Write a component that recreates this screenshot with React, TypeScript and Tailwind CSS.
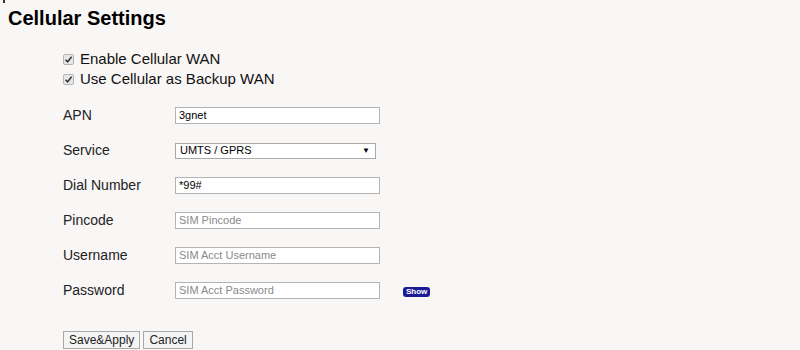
import React from 'react';

interface Field {
  label: string;
  value?: string;
  placeholder?: string;
}

const fields: Field[] = [
  { label: 'APN', value: '3gnet' },
  { label: 'Service' },
  { label: 'Dial Number', value: '*99#' },
  { label: 'Pincode', placeholder: 'SIM Pincode' },
  { label: 'Username', placeholder: 'SIM Acct Username' },
  { label: 'Password', placeholder: 'SIM Acct Password' },
];

const CheckRow: React.FC<{ label: string }> = ({ label }) => (
  <div className="flex items-center h-[20px]">
    <span className="w-[11px] h-[11px] border border-[#b5b5b5] bg-[#e6e6e6] rounded-[2px] flex items-center justify-center">
      <svg width="9" height="9" viewBox="0 0 9 9">
        <path d="M1.5 4.8 L3.6 6.8 L7.6 1.8" stroke="#333" strokeWidth="1.5" fill="none" />
      </svg>
    </span>
    <span className="ml-[6px] text-[15px] text-[#111]">{label}</span>
  </div>
);

export default function App() {
  return (
    <div className="w-[800px] h-[350px] bg-[#f9f6f6] relative overflow-hidden font-['Liberation_Sans',Arial,sans-serif] text-[#222]">
      <span className="absolute left-[3px] top-0 w-[2px] h-[3px] bg-[#333]" />
      <div className="pl-[8px] pt-[6px]">
        <h1 className="text-[20px] font-bold text-black leading-[24px]">Cellular Settings</h1>
      </div>
      <div className="pl-[63px] pt-[19px]">
        <div className="flex flex-col">
          <CheckRow label="Enable Cellular WAN" />
          <CheckRow label="Use Cellular as Backup WAN" />
        </div>
        <div className="flex flex-col gap-[18px] mt-[18px]">
          {fields.map((f) => (
            <div key={f.label} className="flex items-center h-[17px]">
              <span className="w-[112px] text-[14px] text-[#222]">{f.label}</span>
              {f.label === 'Service' ? (
                <div className="w-[201px] h-[16px] bg-white border border-[#a9a9a9] flex items-center justify-between pl-[4px] pr-[5px] text-[11px] text-black">
                  <span>UMTS / GPRS</span>
                  <span className="text-[8px] leading-none">▼</span>
                </div>
              ) : (
                <div className={`w-[205px] h-[17px] bg-white border border-[#b4b4b4] flex items-center pl-[3px] text-[11px] ${f.value ? 'text-black' : 'text-[#8a8a8a]'}`}>
                  {f.value ?? f.placeholder}
                </div>
              )}
              {f.label === 'Password' && (
                <span className="ml-[23px] mt-[2px] px-[3px] h-[10px] flex items-center rounded-[3px] bg-[#1b1b96] text-white text-[8px] font-bold">
                  Show
                </span>
              )}
            </div>
          ))}
        </div>
        <div className="flex gap-[3px] mt-[32px]">
          <button className="h-[18px] px-[5px] border border-[#a9a9a9] bg-[#f4f4f4] text-[12px] text-[#222] leading-none">
            Save&amp;Apply
          </button>
          <button className="h-[18px] px-[5px] border border-[#a9a9a9] bg-[#f4f4f4] text-[12px] text-[#222] leading-none">
            Cancel
          </button>
        </div>
      </div>
    </div>
  );
}
